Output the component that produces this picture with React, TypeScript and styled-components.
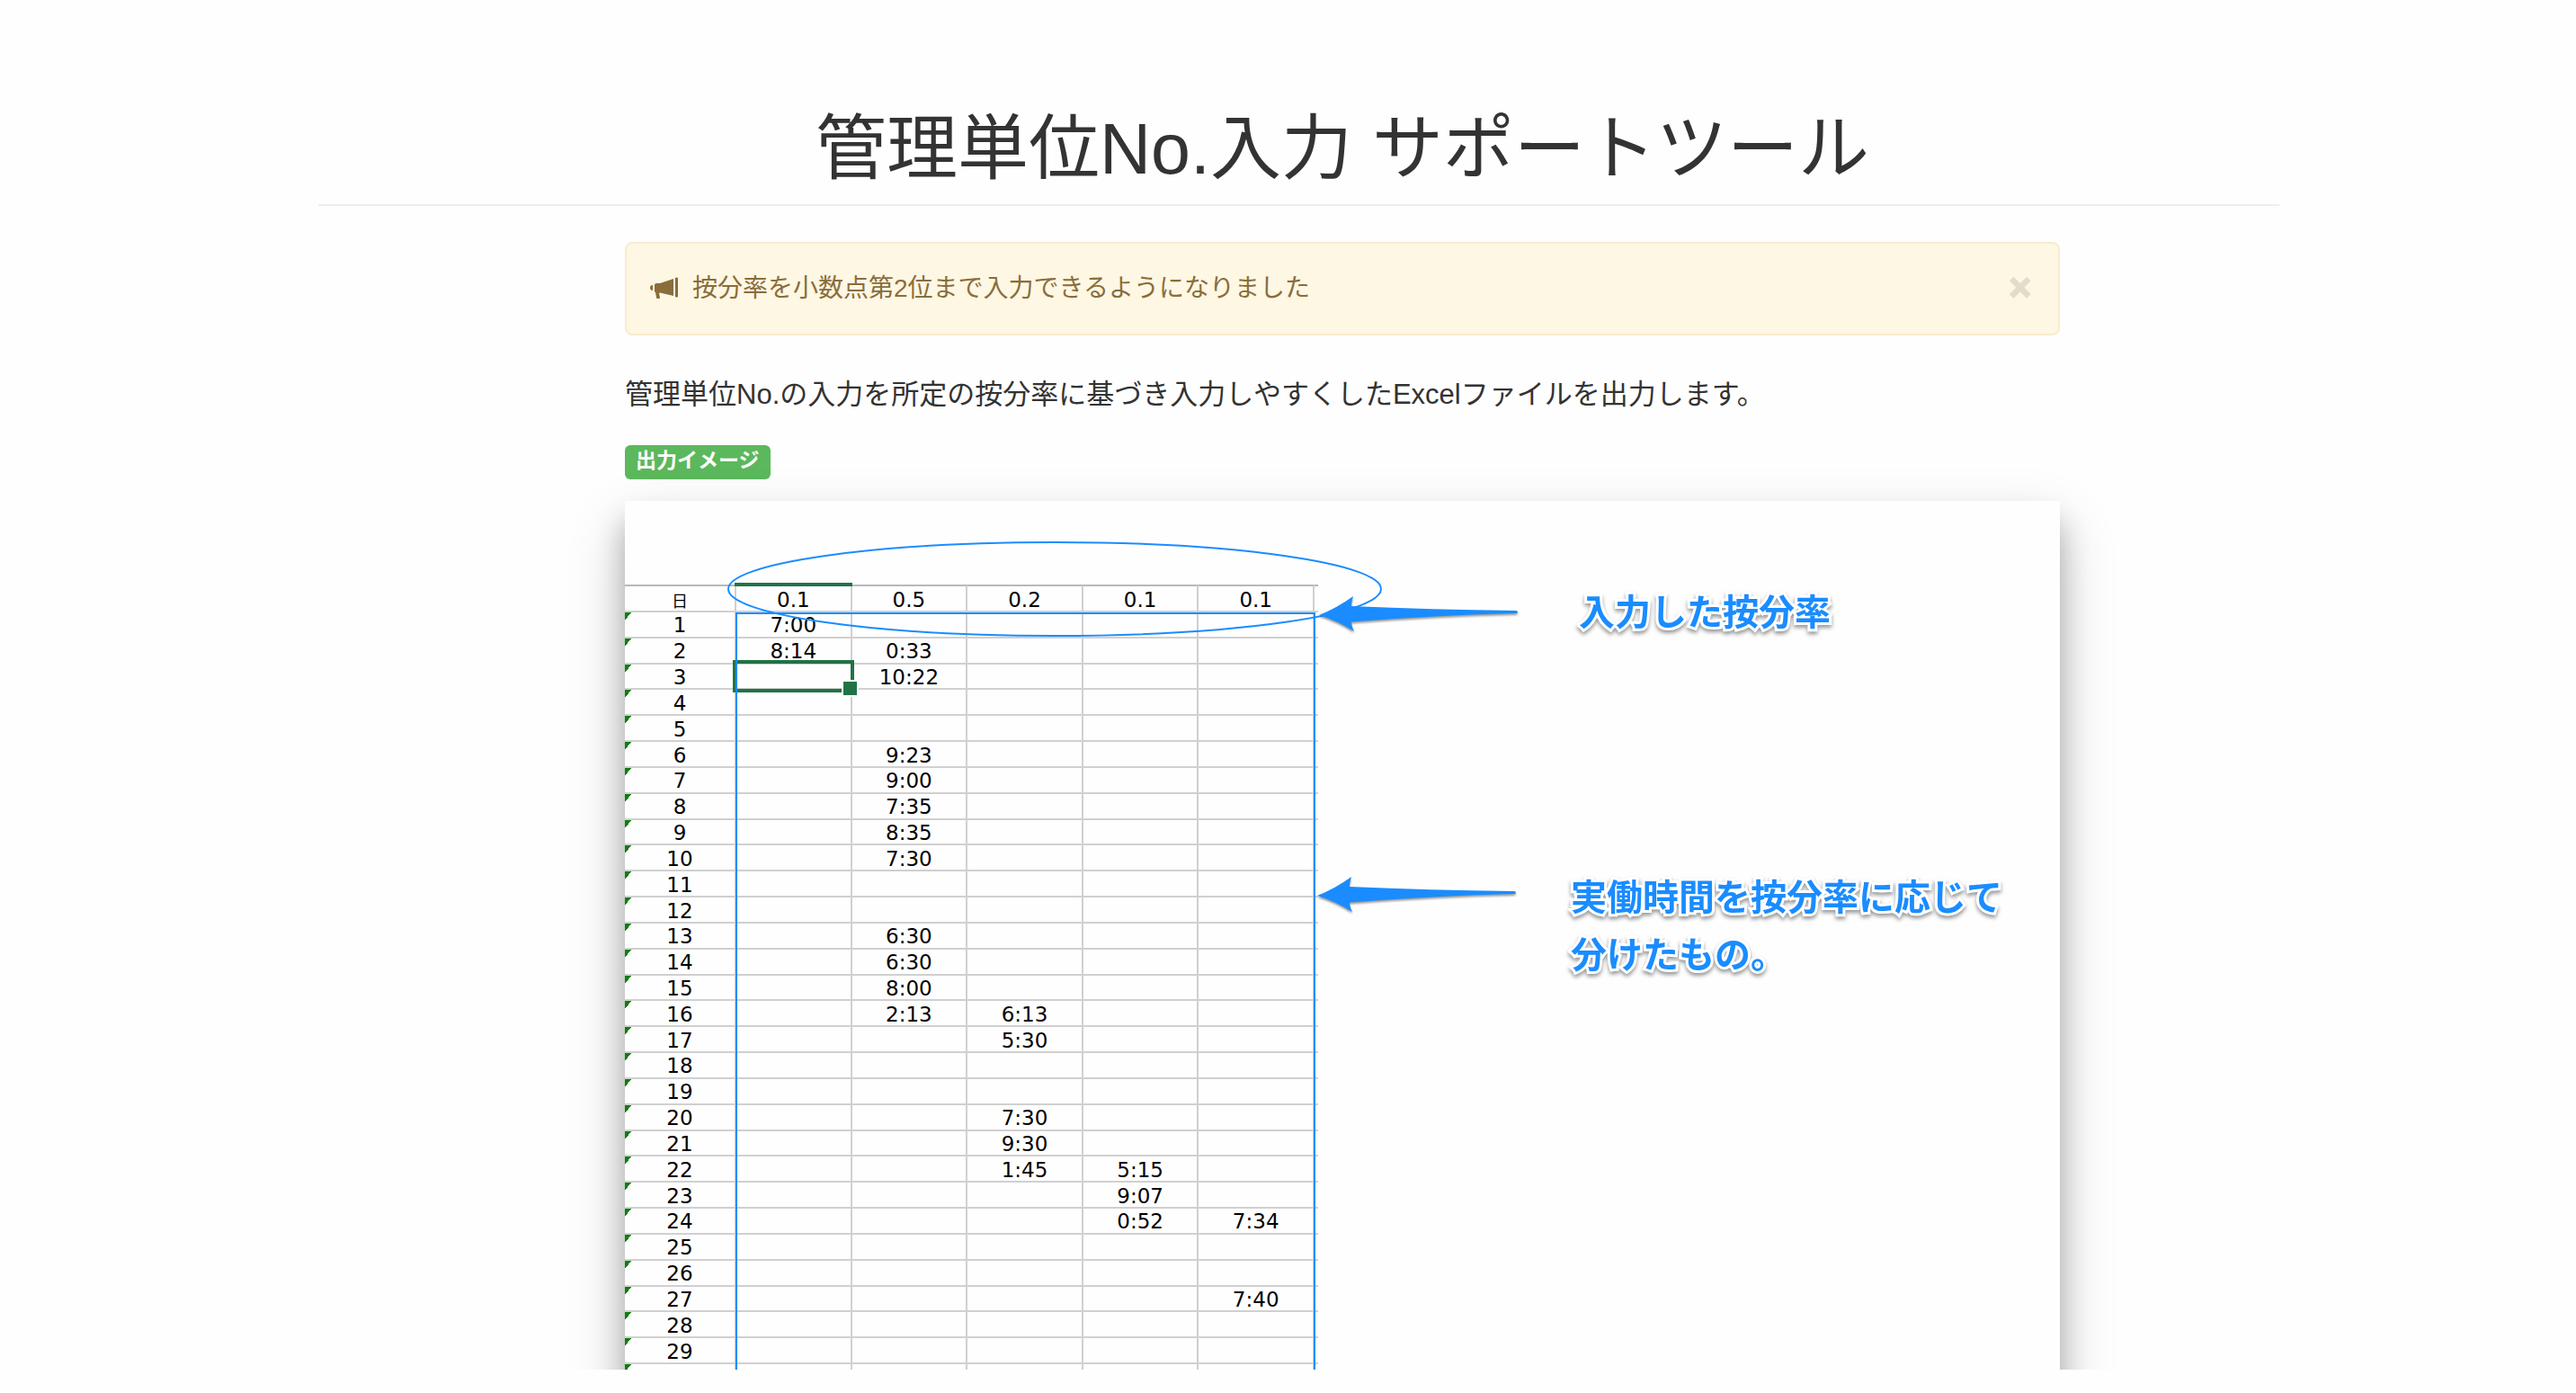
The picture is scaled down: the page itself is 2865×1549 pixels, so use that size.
import React from 'react';
import styled, { createGlobalStyle } from 'styled-components';

const BLUE = '#1a8cff';
const GREEN = '#217346';

const GlobalStyle = createGlobalStyle`
  * { box-sizing: border-box; }
  body {
    margin: 0;
    background: #fefefe;
    color: #333;
    font-family: "Liberation Sans", "Noto Sans CJK JP", sans-serif;
  }
`;

const Page = styled.div`
  height: calc(100vh - 26px);
  padding-left: 24px;
  overflow: hidden;
`;

const Container = styled.div`
  max-width: 2181px;
  margin: 0 auto;
`;

const Header = styled.header`
  padding: 110px 244px 6px 341px;
  border-bottom: 2px solid #eee;
  text-align: center;
`;

const Title = styled.h1`
  margin: 0;
  font-size: 79px;
  font-weight: 400;
  line-height: 111px;
  white-space: nowrap;
`;

const Main = styled.main`
  padding: 40px 244px 0 341px;
`;

const Alert = styled.div`
  display: flex;
  align-items: center;
  padding: 30px;
  border: 2px solid #faebcc;
  border-radius: 8px;
  background: #fdf7e3;
  color: #8a6d3b;
  font-size: 28px;
  line-height: 40px;
`;

const Horn = styled.svg`
  width: 32px;
  height: 26px;
  margin: 0 15px 0 -4px;
`;

const AlertText = styled.span`
  flex: 1;
`;

const CloseButton = styled.button`
  padding: 0 0 2px;
  border: 0;
  background: none;
  color: #000;
  font: bold 42px/38px "Liberation Sans", sans-serif;
  -webkit-text-stroke: 2px #000;
  opacity: 0.1;
  cursor: pointer;
`;

const Lead = styled.p`
  margin: 44px 0 34px;
  font-size: 31px;
  line-height: 44px;
`;

const Badge = styled.span`
  display: block;
  width: fit-content;
  padding: 0 12px 4px;
  border-radius: 6px;
  background: #5cb85c;
  color: #fff;
  font-size: 23px;
  font-weight: bold;
  line-height: 34px;
`;

const Sheet = styled.figure`
  position: relative;
  margin: 24px 0 0;
  padding: 93px 0 60px;
  background: #fefefe;
  box-shadow: 0 24px 30px 0 rgba(0, 0, 0, 0.24), 0 26px 60px 0 rgba(0, 0, 0, 0.19);
`;

const Table = styled.table`
  width: 771px;
  height: 896px;
  table-layout: fixed;
  border-collapse: separate;
  border-spacing: 0;
  color: #000;
  font-family: "DejaVu Sans", sans-serif;
  font-size: 23px;
  line-height: 24px;
  text-align: center;

  tr { height: 28px; }
  thead tr { height: 31px; }
  th, td {
    padding: 2px 0 0;
    border-right: 2px solid #d0d0d0;
    border-bottom: 2px solid #d0d0d0;
    font-weight: normal;
  }
  thead th, thead td { border-top: 2px solid #b8b8b8; }
  tbody th {
    background: linear-gradient(to bottom right, #0a800a 50%, transparent 50%) 0 0 / 7px 9px no-repeat;
  }
  tr > :last-child { border-right: 0; }
`;

const Col = styled.col<{ $w?: number }>`
  width: ${(p) => (p.$w ? `${p.$w}px` : 'auto')};
`;

const DayHead = styled.span`
  font-family: "Noto Sans CJK JP", sans-serif;
  font-size: 18px;
`;

const ColumnMark = styled.div`
  position: absolute;
  left: 122px;
  top: 91px;
  width: 131px;
  height: 4px;
  background: ${GREEN};
`;

const Selection = styled.div`
  position: absolute;
  left: 120px;
  top: 177px;
  width: 135px;
  height: 36px;
  border: 4px solid ${GREEN};

  &::after {
    content: '';
    position: absolute;
    right: -9px;
    bottom: -9px;
    width: 15px;
    height: 15px;
    border: 2px solid #fefefe;
    background: ${GREEN};
  }
`;

const Range = styled.div`
  position: absolute;
  left: 123px;
  top: 124px;
  bottom: 0;
  width: 645px;
  border: solid ${BLUE};
  border-width: 2px 2px 0;
`;

const Marks = styled.svg`
  position: absolute;
  left: 0;
  top: 0;
  width: 100%;
  height: 100%;
`;

const Arrows = styled.g`
  fill: ${BLUE};
  filter: drop-shadow(0 2px 1px rgba(0, 0, 0, 0.4));
`;

const Note = styled.p<{ $x: number; $y: number }>`
  position: absolute;
  left: ${(p) => p.$x}px;
  top: ${(p) => p.$y}px;
  margin: 0;
  color: ${BLUE};
  font-family: "Noto Sans CJK JP", sans-serif;
  font-size: 40px;
  font-weight: bold;
  line-height: 64px;
  white-space: nowrap;
  -webkit-text-stroke: 6px #fff;
  paint-order: stroke fill;
  filter: drop-shadow(0 3px 2px rgba(0, 0, 0, 0.4));
`;

const rates = ['0.1', '0.5', '0.2', '0.1', '0.1'];

const hours: Record<number, string[]> = {
  1: ['7:00'],
  2: ['8:14', '0:33'],
  3: ['', '10:22'],
  6: ['', '9:23'],
  7: ['', '9:00'],
  8: ['', '7:35'],
  9: ['', '8:35'],
  10: ['', '7:30'],
  13: ['', '6:30'],
  14: ['', '6:30'],
  15: ['', '8:00'],
  16: ['', '2:13', '6:13'],
  17: ['', '', '5:30'],
  20: ['', '', '7:30'],
  21: ['', '', '9:30'],
  22: ['', '', '1:45', '5:15'],
  23: ['', '', '', '9:07'],
  24: ['', '', '', '0:52', '7:34'],
  27: ['', '', '', '', '7:40'],
};

const days = Array.from({ length: 30 }, (_, i) => i + 1);

const ARROW =
  'M0 0 Q20 -8 38 -21 Q36 -15 36 -10 Q125 -6 219 -5 Q221 -5 221 -3.500 Q221 -2 219 -2 Q130 0 36 7.500 Q36 12 39 18 Q20 6 0 0 Z';

export default function App() {
  return (
    <>
      <GlobalStyle />
      <Page>
        <Container>
          <Header>
            <Title>管理単位No.入力 サポートツール</Title>
          </Header>
          <Main>
            <Alert role="alert">
              <Horn viewBox="0 0 32 26" fill="currentColor" aria-hidden="true">
                <path d="M3 9 V15 Q0 15 0 12 Q0 9 3 9 Z" />
                <path d="M5 9 Q5 7 7 7 H11 L26 2 V21 L11 17.500 L10 18 L11 23 Q11 24 10 24 H8 Q7 24 7 23 L6 17 Q5 17 5 16 Z" />
                <path d="M28 1 Q29.500 0 31 1 V22 Q29.500 23 28 22 Z" />
              </Horn>
              <AlertText>按分率を小数点第2位まで入力できるようになりました</AlertText>
              <CloseButton type="button" aria-label="閉じる">×</CloseButton>
            </Alert>
            <Lead>
              管理単位No.の入力を所定の按分率に基づき入力しやすくしたExcelファイルを出力します。
            </Lead>
            <Badge>出力イメージ</Badge>
            <Sheet>
              <Table>
                <colgroup>
                  <Col $w={124} />
                  {rates.map((_, i) => (
                    <Col key={i} />
                  ))}
                  <Col $w={4} />
                </colgroup>
                <thead>
                  <tr>
                    <th scope="col">
                      <DayHead>日</DayHead>
                    </th>
                    {rates.map((rate, i) => (
                      <th scope="col" key={i}>{rate}</th>
                    ))}
                    <td />
                  </tr>
                </thead>
                <tbody>
                  {days.map((day) => (
                    <tr key={day}>
                      <th scope="row">{day}</th>
                      {rates.map((_, i) => (
                        <td key={i}>{hours[day]?.[i]}</td>
                      ))}
                      <td />
                    </tr>
                  ))}
                </tbody>
              </Table>
              <ColumnMark />
              <Selection />
              <Range />
              <Marks aria-hidden="true">
                <ellipse cx="478" cy="98" rx="363" ry="52" fill="none" stroke={BLUE} strokeWidth="2" />
                <Arrows>
                  <path d={ARROW} transform="translate(772 127)" />
                  <path d={ARROW} transform="translate(770 439)" />
                </Arrows>
              </Marks>
              <Note $x={1061} $y={89}>入力した按分率</Note>
              <Note $x={1052} $y={406}>
                実働時間を按分率に応じて
                <br />
                分けたもの。
              </Note>
            </Sheet>
          </Main>
        </Container>
      </Page>
    </>
  );
}
